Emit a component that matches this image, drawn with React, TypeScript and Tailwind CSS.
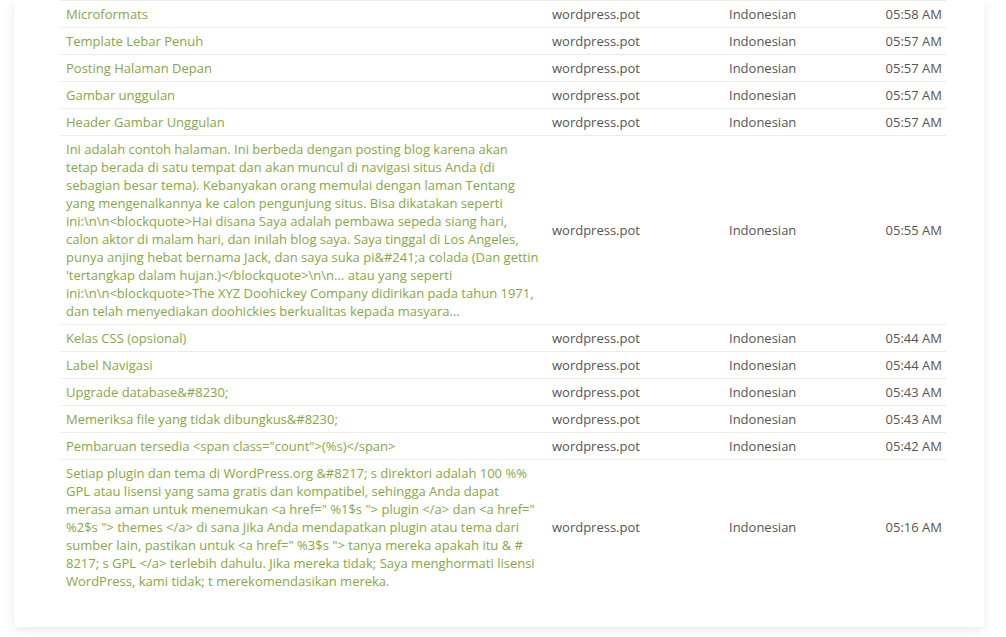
import React from "react";

type Row = { title: string; file: string; lang: string; time: string };

const rows: Row[] = [
  { title: "Microformats", file: "wordpress.pot", lang: "Indonesian", time: "05:58 AM" },
  { title: "Template Lebar Penuh", file: "wordpress.pot", lang: "Indonesian", time: "05:57 AM" },
  { title: "Posting Halaman Depan", file: "wordpress.pot", lang: "Indonesian", time: "05:57 AM" },
  { title: "Gambar unggulan", file: "wordpress.pot", lang: "Indonesian", time: "05:57 AM" },
  { title: "Header Gambar Unggulan", file: "wordpress.pot", lang: "Indonesian", time: "05:57 AM" },
  {
    title:
      "Ini adalah contoh halaman. Ini berbeda dengan posting blog karena akan tetap berada di satu tempat dan akan muncul di navigasi situs Anda (di sebagian besar tema). Kebanyakan orang memulai dengan laman Tentang yang mengenalkannya ke calon pengunjung situs. Bisa dikatakan seperti ini:\\n\\n<blockquote>Hai disana Saya adalah pembawa sepeda siang hari, calon aktor di malam hari, dan inilah blog saya. Saya tinggal di Los Angeles, punya anjing hebat bernama Jack, dan saya suka pi&#241;a colada (Dan gettin 'tertangkap dalam hujan.)</blockquote>\\n\\n... atau yang seperti ini:\\n\\n<blockquote>The XYZ Doohickey Company didirikan pada tahun 1971, dan telah menyediakan doohickies berkualitas kepada masyara...",
    file: "wordpress.pot",
    lang: "Indonesian",
    time: "05:55 AM",
  },
  { title: "Kelas CSS (opsional)", file: "wordpress.pot", lang: "Indonesian", time: "05:44 AM" },
  { title: "Label Navigasi", file: "wordpress.pot", lang: "Indonesian", time: "05:44 AM" },
  { title: "Upgrade database&#8230;", file: "wordpress.pot", lang: "Indonesian", time: "05:43 AM" },
  { title: "Memeriksa file yang tidak dibungkus&#8230;", file: "wordpress.pot", lang: "Indonesian", time: "05:43 AM" },
  { title: 'Pembaruan tersedia <span class="count">(%s)</span>', file: "wordpress.pot", lang: "Indonesian", time: "05:42 AM" },
  {
    title:
      'Setiap plugin dan tema di WordPress.org &#8217; s direktori adalah 100 %% GPL atau lisensi yang sama gratis dan kompatibel, sehingga Anda dapat merasa aman untuk menemukan <a href=" %1$s "> plugin </a> dan <a href=" %2$s "> themes </a> di sana Jika Anda mendapatkan plugin atau tema dari sumber lain, pastikan untuk <a href=" %3$s "> tanya mereka apakah itu & # 8217; s GPL </a> terlebih dahulu. Jika mereka tidak; Saya menghormati lisensi WordPress, kami tidak; t merekomendasikan mereka.',
    file: "wordpress.pot",
    lang: "Indonesian",
    time: "05:16 AM",
  },
];

export default function App() {
  return (
    <div className="min-h-[637px] bg-white font-['Open_Sans',sans-serif] text-[13px] leading-[18px]">
      <div className="ml-[14px] w-[970px] rounded-b-[4px] bg-white pl-[47px] pr-[38px] pb-[33px] shadow-[0_3px_12px_rgba(0,0,0,0.09)]">
        <table className="w-full table-fixed border-collapse border-t border-[#ebebe5]">
          <colgroup>
            <col className="w-[486px]" />
            <col className="w-[177px]" />
            <col />
            <col className="w-[120px]" />
          </colgroup>
          <tbody>
            {rows.map((r, i) => (
              <tr
                key={i}
                className={i === rows.length - 1 ? "" : "border-b border-[#ebebe5]"}
              >
                <td className="py-[4px] pl-[5px] pr-[6px] align-middle text-[#86a746] break-words">
                  {r.title}
                </td>
                <td className="py-[4px] pl-[5px] align-middle text-[#555555]">{r.file}</td>
                <td className="py-[4px] pl-[5px] align-middle text-[#555555]">{r.lang}</td>
                <td className="py-[4px] pr-[4px] text-right align-middle text-[#555555]">{r.time}</td>
              </tr>
            ))}
          </tbody>
        </table>
      </div>
    </div>
  );
}
